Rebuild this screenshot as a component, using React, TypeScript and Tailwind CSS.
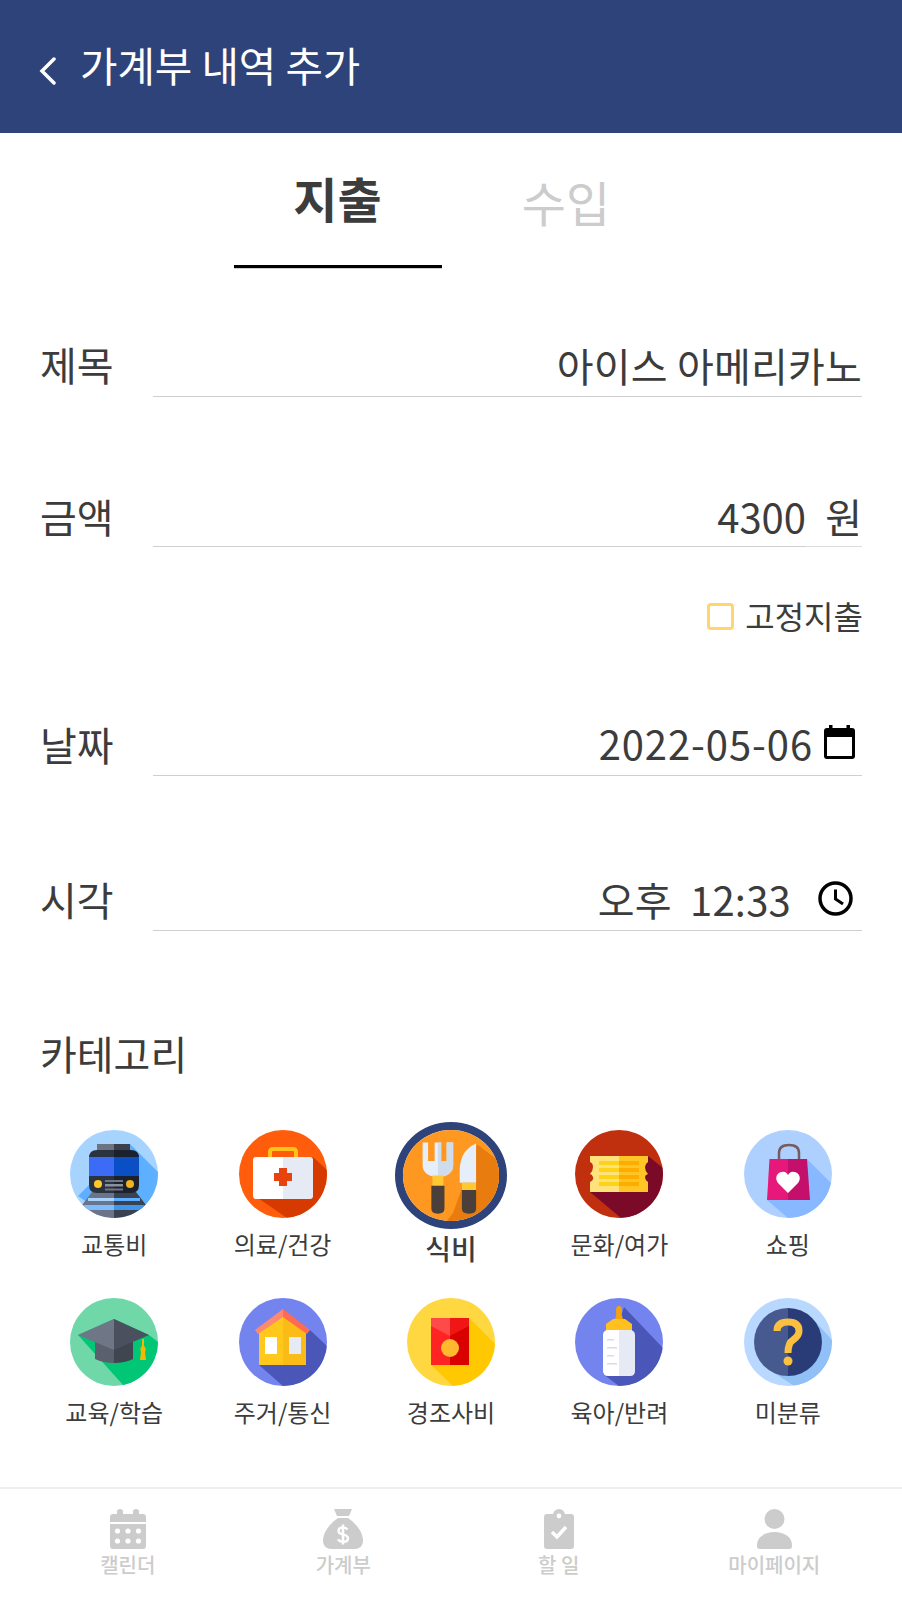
const font = "font-['Noto_Sans_CJK_KR','Noto_Sans',sans-serif]";

function Disc({ id, bg, shadow, points, children }: { id: string; bg: string; shadow: string; points: string; children: React.ReactNode }) {
  return (
    <svg viewBox="0 0 88 88" preserveAspectRatio="none" className="h-full w-full">
      <defs>
        <clipPath id={id}>
          <circle cx="44" cy="44" r="44" />
        </clipPath>
      </defs>
      <g clipPath={`url(#${id})`}>
        <rect width="88" height="88" fill={bg} />
        <polygon points={points} fill={shadow} />
        {children}
      </g>
    </svg>
  );
}

const TrainIcon = () => (
  <Disc id="train" bg="#a6d4ff" shadow="#5cb0ff" points="60,14 88,42 88,88 40,88 8,66">
    <rect x="27" y="14" width="17" height="8" fill="#6d7380" />
    <rect x="44" y="14" width="16" height="8" fill="#3b404c" />
    <polygon points="22,62 44,62 44,88 2,88" fill="#6b7488" />
    <polygon points="44,62 66,62 86,88 44,88" fill="#3a4252" />
    <rect x="18" y="68" width="26" height="3" fill="#a6d4ff" />
    <rect x="44" y="68" width="26" height="3" fill="#5cb0ff" />
    <rect x="12" y="75" width="32" height="5" fill="#7cbdff" />
    <rect x="44" y="75" width="32" height="5" fill="#3f97ec" />
    <path d="M27 20H44V63H27Q19 63 19 55V28Q19 20 27 20Z" fill="#2a3340" />
    <path d="M44 20H61Q69 20 69 28V55Q69 63 61 63H44Z" fill="#1c222d" />
    <rect x="19" y="27" width="25" height="19" fill="#3c6cf5" />
    <rect x="44" y="27" width="25" height="19" fill="#0a4fc4" />
    <circle cx="28" cy="54" r="4" fill="#ffc928" />
    <circle cx="60" cy="54" r="4" fill="#f2b31c" />
    <rect x="35" y="50" width="18" height="2" fill="#6f7684" />
    <rect x="35" y="54" width="18" height="2.500" fill="#8a909e" />
    <rect x="35" y="58.500" width="18" height="2" fill="#6f7684" />
  </Disc>
);

const MedicalIcon = () => (
  <Disc id="medical" bg="#ff5c0c" shadow="#d63a00" points="74,27 88,40 88,88 48,88 16,66">
    <path d="M31 28V22Q31 19 34 19H54Q57 19 57 22V28" fill="none" stroke="#ffc21a" strokeWidth="4" />
    <path d="M17 27H44V69H17Q14 69 14 66V30Q14 27 17 27Z" fill="#ffffff" />
    <path d="M44 27H71Q74 27 74 30V66Q74 69 71 69H44Z" fill="#e6eaf5" />
    <path d="M40 38H48V43H53V51H48V56H40V51H35V43H40Z" fill="#e8430c" />
  </Disc>
);

const FoodIcon = () => (
  <Disc id="food" bg="#ff9820" shadow="#e87c0e" points="46,80 68,14 88,30 88,88 40,88">
    <path d="M18 12H23V30H29V12H35V30H40V12H46V34Q46 44 32 46Q18 44 18 34Z" fill="#e6eefa" />
    <path d="M32 12H35V30H40V12H46V34Q46 44 32 46Z" fill="#cfdcec" />
    <rect x="27" y="44" width="10" height="10" fill="#ffc933" />
    <path d="M26 54H38V76Q38 81 32 81Q26 81 26 76Z" fill="#4a3f3a" />
    <path d="M67 13V51H52V39Q52 20 67 13Z" fill="#e6eefa" />
    <rect x="54" y="51" width="13" height="7" fill="#ffc933" />
    <path d="M54 58H67V76Q67 81 60.500 81Q54 81 54 76Z" fill="#4a3f3a" />
  </Disc>
);

const TicketIcon = () => (
  <Disc id="ticket" bg="#c0300e" shadow="#7a0a28" points="73,26 88,38 88,88 46,88 15,62">
    <path d="M15 26H44V62H15V52Q19 50 18 47Q17 44 15 44Q18 41 18 37Q18 33 15 32Z" fill="#ffe27a" />
    <path d="M44 26H73V32Q70 34 70 37Q70 41 73 44Q70 45 70 47Q70 50 73 52V62H44Z" fill="#ffc425" />
    {[31, 38, 45, 52].map((y) => (
      <g key={y}>
        <rect x="24" y={y} width="20" height="4" fill="#ffd21a" />
        <rect x="44" y={y} width="20" height="4" fill="#ffac00" />
      </g>
    ))}
  </Disc>
);

const BagIcon = () => (
  <Disc id="bag" bg="#aed0ff" shadow="#88b8ff" points="63,29 88,54 88,88 44,88 23,70">
    <path d="M35 33V23Q35 15 45 15Q55 15 55 23V33" fill="none" stroke="#7a5a5e" strokeWidth="2.500" />
    <polygon points="25.500,29 44,29 44,70 23,70" fill="#e6187a" />
    <polygon points="44,29 63,29 66,70 44,70" fill="#c4106a" />
    <path d="M44 63L34 53Q31 49 33 45Q36 41 41 42Q43 43 44 45Q45 43 47 42Q52 41 55 45Q57 49 54 53Z" fill="#ffffff" />
  </Disc>
);

const CapIcon = () => (
  <Disc id="cap" bg="#70d8a8" shadow="#00c676" points="8,37 44,21 79,37 88,44 88,88 54,88">
    <path d="M25 44H44V65Q33 65 25 61Z" fill="#5a606d" />
    <path d="M44 44H63V61Q55 65 44 65Z" fill="#40454f" />
    <polygon points="44,21 44,52 8,37" fill="#6f7786" />
    <polygon points="44,21 79,37 44,52" fill="#4a505e" />
    <rect x="72" y="41" width="2" height="8" fill="#f5b800" />
    <path d="M73 47Q77 50 75 54L76 62H70L71 54Q69 50 73 47Z" fill="#f5b800" />
  </Disc>
);

const HouseIcon = () => (
  <Disc id="house" bg="#7484ee" shadow="#4a56b8" points="71,32 88,48 88,88 44,88 20,67">
    <polygon points="44,14 44,67 20,67 20,30" fill="#ffc81a" />
    <polygon points="44,14 67,30 67,67 44,67" fill="#fbbc18" />
    <polygon points="44,11 44,19 19,36 16,32" fill="#ff8870" />
    <polygon points="44,11 71,32 68,36 44,19" fill="#ff6a50" />
    <rect x="26" y="39" width="12" height="17" fill="#ffffff" />
    <rect x="50" y="39" width="12" height="17" fill="#e6eaf5" />
  </Disc>
);

const EnvelopeIcon = () => (
  <Disc id="envelope" bg="#ffd740" shadow="#ffc800" points="62,20 88,46 88,88 46,88 24,67">
    <rect x="24" y="20" width="19" height="47" fill="#ff2424" />
    <rect x="43" y="20" width="19" height="47" fill="#d90000" />
    <polygon points="24,20 43,20 43,38 24,28" fill="#ff4a4a" />
    <polygon points="43,20 62,20 62,28 43,38" fill="#f01616" />
    <circle cx="43" cy="50" r="9" fill="#ffb92e" />
  </Disc>
);

const BottleIcon = () => (
  <Disc id="bottle" bg="#7484ee" shadow="#4a56b8" points="49,9 88,50 88,88 44,88 28,76">
    <path d="M40 21Q42 17 41 13Q41 8 44 8Q47 8 47 13Q46 17 48 21Z" fill="#f5a30c" />
    <path d="M38 21H50L57 26V33H31V26Z" fill="#ffc020" />
    <path d="M32 32H44V78H33Q28 78 28 73V37Q28 33 32 32Z" fill="#ffffff" />
    <path d="M44 32H56Q60 33 60 37V73Q60 78 55 78H44Z" fill="#e6eaf5" />
    <rect x="32" y="41" width="7" height="1.500" fill="#d8dce6" />
    <rect x="32" y="49" width="10" height="1.500" fill="#d8dce6" />
    <rect x="32" y="57" width="7" height="1.500" fill="#d8dce6" />
    <rect x="32" y="65" width="10" height="1.500" fill="#d8dce6" />
  </Disc>
);

const QuestionIcon = () => (
  <Disc id="question" bg="#b8d8ff" shadow="#90c0f5" points="68,20 88,42 88,88 50,88 20,68">
    <path d="M44 10A34 34 0 0 0 44 78Z" fill="#475a90" />
    <path d="M44 10A34 34 0 0 1 44 78Z" fill="#2a3c78" />
    <path d="M33 33Q33 24 44 24Q55 24 55 33Q55 38 49 42Q44 45 44 55" fill="none" stroke="#fbc040" strokeWidth="7" />
    <circle cx="44" cy="63" r="4.500" fill="#fbc040" />
  </Disc>
);

const categories = [
  { label: "교통비", icon: <TrainIcon /> },
  { label: "의료/건강", icon: <MedicalIcon /> },
  { label: "식비", icon: <FoodIcon />, selected: true },
  { label: "문화/여가", icon: <TicketIcon /> },
  { label: "쇼핑", icon: <BagIcon /> },
  { label: "교육/학습", icon: <CapIcon /> },
  { label: "주거/통신", icon: <HouseIcon /> },
  { label: "경조사비", icon: <EnvelopeIcon /> },
  { label: "육아/반려", icon: <BottleIcon /> },
  { label: "미분류", icon: <QuestionIcon /> },
];

const navItems = [
  {
    label: "캘린더",
    icon: (
      <svg viewBox="0 0 36 40" className="h-10 w-9" fill="#cccccc">
        <rect x="7" y="0" width="6" height="8" rx="3" />
        <rect x="23" y="0" width="6" height="8" rx="3" />
        <path d="M3 5H33Q36 5 36 8V13H0V8Q0 5 3 5Z" />
        <path d="M0 15H36V37Q36 40 33 40H3Q0 40 0 37Z" />
        {[7.5, 18, 28.5].map((x) => (
          <g key={x} fill="#ffffff">
            <circle cx={x} cy="22" r="2.600" />
            <circle cx={x} cy="32" r="2.600" />
          </g>
        ))}
      </svg>
    ),
  },
  {
    label: "가계부",
    icon: (
      <svg viewBox="0 0 40 40" className="h-10 w-10" fill="#cccccc">
        <path d="M11 0H29L26 7H14Z" />
        <path d="M15 9H25C32 14 40 22 40 32C40 37 36 40 32 40H8C4 40 0 37 0 32C0 22 8 14 15 9Z" />
        <path
          d="M24.500 20.500C23.500 19 22 18.500 20 18.500C17.200 18.500 15.500 19.900 15.500 22C15.500 26.800 25 24.400 25 29.200C25 31.400 23 32.800 20 32.800C17.800 32.800 16 32 15 30.400M20 15.500V35.500"
          fill="none"
          stroke="#ffffff"
          strokeWidth="2.500"
        />
      </svg>
    ),
  },
  {
    label: "할 일",
    icon: (
      <svg viewBox="0 0 30 40" className="h-10 w-[30px]" fill="#cccccc">
        <circle cx="15" cy="6" r="6" />
        <path d="M3 5H27Q30 5 30 8V37Q30 40 27 40H3Q0 40 0 37V8Q0 5 3 5Z" />
        <circle cx="15" cy="7" r="2.400" fill="#ffffff" />
        <path d="M8 23L13 28L22 18" fill="none" stroke="#ffffff" strokeWidth="3.500" />
      </svg>
    ),
  },
  {
    label: "마이페이지",
    icon: (
      <svg viewBox="0 0 35 40" className="h-10 w-[35px]" fill="#cccccc">
        <circle cx="17.500" cy="10" r="10" />
        <path d="M0 36C0 28 8 23 17.500 23S35 28 35 36V37A3 3 0 0 1 32 40H3A3 3 0 0 1 0 37Z" />
      </svg>
    ),
  },
];

function Field({ label, labelClass, value, className, children }: { label: string; labelClass: string; value: React.ReactNode; className: string; children?: React.ReactNode }) {
  return (
    <div className={`flex items-end pl-[40px] pr-[40px] ${className}`}>
      <div className={`w-[113px] shrink-0 text-[40px] leading-[60px] ${labelClass}`}>{label}</div>
      <div className="flex h-[60px] flex-1 items-center justify-end border-b-[1.5px] border-[#cfcfcf] text-[40px] leading-[60px]">
        {value}
        {children}
      </div>
    </div>
  );
}

export default function App() {
  return (
    <div className={`flex h-[1603px] w-[902px] flex-col overflow-hidden bg-white text-[#3c3c3c] ${font}`}>
      <header className="flex h-[133px] shrink-0 items-center bg-[#2e4379] pl-[39px] text-white">
        <svg viewBox="0 0 18 28" className="mt-[8px] h-7 w-[18px]" fill="none" stroke="#ffffff" strokeWidth="3.500" strokeLinecap="round">
          <path d="M15 2L3 14L15 26" />
        </svg>
        <h1 className="ml-[23px] -translate-y-[1px] text-[40.7px] font-normal leading-none">가계부 내역 추가</h1>
      </header>

      <div className="flex h-[135px] shrink-0 justify-center gap-[19px]">
        <div className="flex h-full w-[208px] items-center justify-center border-b-[3px] border-black pb-[5px] text-[48px] font-bold leading-none shadow-[0_1px_0_#cccccc]">
          지출
        </div>
        <div className="flex h-full w-[208px] items-center justify-center pl-[3px] pt-[1px] text-[48px] leading-none text-[#cccccc]">수입</div>
      </div>

      <Field label="제목" labelClass="pb-[3px]" value={<span className="pb-[4px] tracking-[0.2px]">아이스 아메리카노</span>} className="h-[129px]" />

      <div className="flex h-[150px] items-end pl-[40px] pr-[40px]">
        <div className="w-[113px] shrink-0 pb-[1px] text-[40px] leading-[60px]">금액</div>
        <div className="flex h-[60px] flex-1 items-center justify-end border-b-[1.5px] border-[#cfcfcf] pb-[2px] text-[40px] leading-[60px]">
          4300
        </div>
        <div className="flex h-[60px] w-[56px] items-center justify-end border-b-[1.5px] border-[#dddddd] pb-[2px] text-[40px] leading-[60px]">원</div>
      </div>

      <div className="mt-[54px] flex items-center justify-end gap-[12px] pr-[39px]">
        <span className="h-[27px] w-[27px] translate-x-[1px] rounded-[4px] border-[3px] border-[#ffd570]" />
        <span className="-translate-y-[1px] text-[32px] leading-[30px]">고정지출</span>
      </div>

      <Field
        label="날짜"
        labelClass="pb-[2px]"
        className="h-[145px]"
        value={<span className="pb-[6px] tracking-[0.9px]">2022-05-06</span>}
      >
        <svg viewBox="0 0 31 34" className="mb-[8px] ml-[11px] mr-[7px] h-[34px] w-[31px]" fill="#000000">
          <rect x="5" y="0" width="3.500" height="7" />
          <rect x="22.500" y="0" width="3.500" height="7" />
          <path fillRule="evenodd" d="M3 3H28Q31 3 31 6V31Q31 34 28 34H3Q0 34 0 31V6Q0 3 3 3ZM3 12V31H28V12Z" />
        </svg>
      </Field>

      <Field
        label="시각"
        labelClass="pb-[2px]"
        className="h-[155px]"
        value={<span className="pb-[4px] tracking-[0.2px]">오후&nbsp; 12:33</span>}
      >
        <svg viewBox="0 0 35 35" className="mb-[5px] ml-[27px] mr-[9px] h-[35px] w-[35px]" fill="none" stroke="#000000" strokeWidth="3.500">
          <circle cx="17.500" cy="17.500" r="15.500" />
          <path d="M17.500 8.500V18L25 23" strokeWidth="3" />
        </svg>
      </Field>

      <h2 className="mt-[92px] pl-[40px] text-[40px] font-normal leading-[60px]">카테고리</h2>

      <div className="mt-[47px] grid grid-cols-5 px-[30px]">
        {categories.map((c) => (
          <div key={c.label} className="flex h-[168px] flex-col items-center">
            {c.selected ? (
              <div className="-mt-[8px] h-[107px] w-[112px] rounded-[50%] border-[8px] border-[#2e4379]">{c.icon}</div>
            ) : (
              <div className="h-[88px] w-[88px]">{c.icon}</div>
            )}
            <span className={c.selected ? "-mt-[1px] text-[28px] font-medium leading-[40px]" : "mt-[8px] text-[24px] leading-[36px]"}>{c.label}</span>
          </div>
        ))}
      </div>

      <nav className="mt-auto grid h-[116px] shrink-0 grid-cols-4 border-t-2 border-[#eeeeee] px-[20px] pt-[20px]">
        {navItems.map((n) => (
          <div key={n.label} className="flex flex-col items-center">
            {n.icon}
            <span className="text-[20px] font-medium leading-[32px] text-[#cccccc]">{n.label}</span>
          </div>
        ))}
      </nav>
    </div>
  );
}
